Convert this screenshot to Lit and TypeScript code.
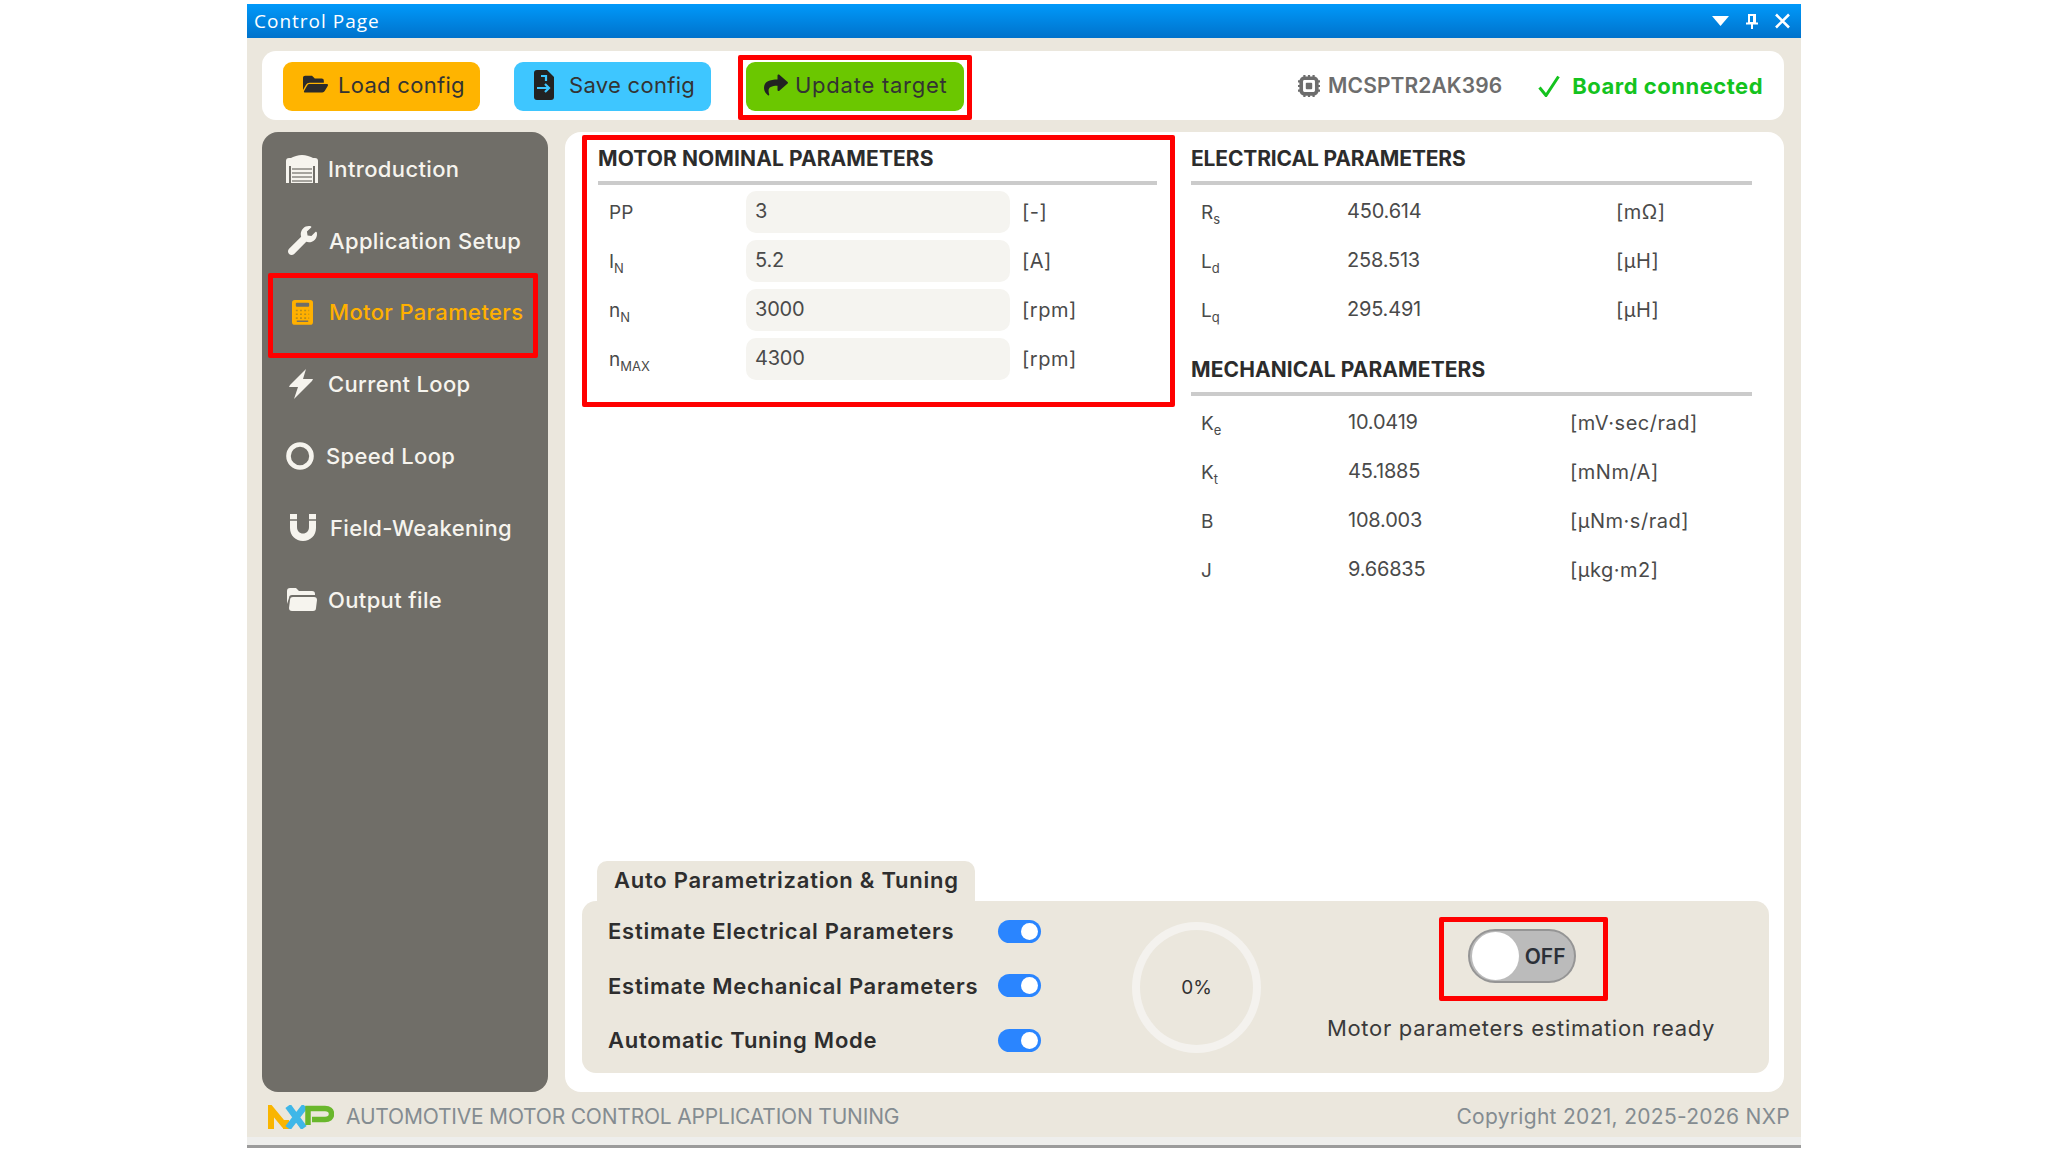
import { LitElement, html, css, svg } from "lit";
import { customElement } from "lit/decorators.js";

const fa = (vb: string, d: string, cls = "") =>
  html`<svg class=${cls} viewBox=${vb} fill="currentColor"><path d=${d}></path></svg>`;

const FOLDER = "M572.694 292.093L500.27 416.248A63.997 63.997 0 0 1 444.989 448H45.025c-18.523 0-30.064-20.093-20.731-36.093l72.424-124.155A64 64 0 0 1 152 256h399.964c18.523 0 30.064 20.093 20.73 36.093zM152 224h328v-48c0-26.51-21.49-48-48-48H272l-64-64H48C21.49 64 0 85.49 0 112v278.046l69.077-118.418C86.214 242.25 117.989 224 152 224z";
const WRENCH = "M507.73 109.1c-2.24-9.03-13.54-12.09-20.12-5.51l-74.36 74.36-67.88-11.31-11.31-67.88 74.36-74.36c6.62-6.62 3.43-17.9-5.66-20.16-47.38-11.74-99.55.91-136.58 37.93-39.64 39.64-50.55 97.1-34.05 147.2L18.74 402.76c-24.99 24.99-24.99 65.51 0 90.5 24.99 24.99 65.51 24.99 90.5 0l213.21-213.21c50.12 16.71 107.47 5.68 147.37-34.22 37.07-37.07 49.7-89.32 37.91-136.73z";
const SHARE = "M503.691 189.836L327.687 37.851C312.281 24.546 288 35.347 288 56.015v80.053C127.371 137.907 0 170.1 0 322.326c0 61.441 39.581 122.309 83.333 154.132 13.653 9.931 33.111-2.533 28.077-18.631C66.066 312.814 132.917 274.316 288 272.085V360c0 20.7 24.3 31.453 39.687 18.164l176.004-152c11.071-9.562 11.086-26.753 0-36.328z";

const garage = html`<svg viewBox="0 0 32 28"><path fill="currentColor" d="M0 28V9c0-3 1-4 4-5.500C8 1.500 12 0 16 0s8 1.500 12 3.500c3 1.500 4 2.500 4 5.500v19h-3V11H3v17z"/><rect x="0" y="3" width="32" height="8" rx="3" fill="currentColor"/><rect x="5" y="11" width="22" height="17" fill="currentColor"/><path stroke="#8a8882" stroke-width="1.4" d="M6 14h20M6 18h20M6 22h20M6 26h20"/></svg>`;
const calc = html`<svg viewBox="0 0 22 26"><rect width="22" height="26" rx="3" fill="currentColor"/><rect x="4" y="3" width="14" height="4" rx="1" fill="#706e68"/><path stroke="#b98c1c" stroke-width="1.6" stroke-dasharray="2 2.4" d="M4 11h14M4 15h14M4 19h14"/><rect x="5" y="21.500" width="12" height="1.500" fill="#706e68"/></svg>`;
const bolt = html`<svg viewBox="0 0 26 30"><path fill="currentColor" d="M18 0 L2 16 L1 18 H10 L6 30 L24 12 L25 10 H15 Z"/></svg>`;
const ring = html`<svg viewBox="0 0 28 28"><circle cx="14" cy="14" r="11.500" fill="none" stroke="currentColor" stroke-width="4.600"/></svg>`;
const magnet = html`<svg viewBox="0 0 26 27"><path fill="currentColor" d="M0 0h7v13c0 4 2.500 6.500 6 6.500s6-2.500 6-6.500V0h7v14c0 7.500-5.500 13-13 13S0 21.500 0 14z"/><path stroke="#706e68" stroke-width="1.500" d="M0 6h7M19 6h7"/></svg>`;
const stackFolder = html`<svg viewBox="0 0 30 23"><path fill="currentColor" d="M0 3c0-2 1-3 3-3h6l3 3h13c2 0 3 1 3 3v1H5c-2 0-3 1-3 3l-2 6z"/><path fill="currentColor" d="M3 12c0-2 1-3 3-3h21c2 0 3 1 3 3l-1 8c0 2-1 3-3 3H5c-2 0-3-1-3-3z"/></svg>`;

const fileIcon = html`<svg viewBox="0 0 20 30"><path fill="currentColor" d="M3 0h10l7 7v20c0 2-1 3-3 3H3c-2 0-3-1-3-3V3c0-2 1-3 3-3z"/><path fill="none" stroke="#3ec6ff" stroke-width="2.200" d="M3 18h12M11 14l4 4-4 4M7 6h5v5"/></svg>`;
const chip = html`<svg viewBox="0 0 24 24"><rect x="3.500" y="3.500" width="17" height="17" rx="3.500" fill="none" stroke="currentColor" stroke-width="4"/><rect x="8.500" y="8.500" width="7" height="7" rx="1" fill="currentColor"/><path stroke="currentColor" stroke-width="2.400" d="M7 0v4M12 0v4M17 0v4M7 20v4M12 20v4M17 20v4M0 7h4M0 12h4M0 17h4M20 7h4M20 12h4M20 17h4"/></svg>`;
const check = html`<svg viewBox="0 0 22 22"><path fill="none" stroke="currentColor" stroke-width="3" d="M1.500 12.500l6.500 8L20.500 1.500"/></svg>`;
const nxp = svg`<path fill="none" stroke="#f9b500" stroke-width="6" d="M3 24V4l14 17"/><path fill="none" stroke="#f9b500" stroke-width="6" d="M18 24V15"/><path fill="none" stroke="#3fb7e8" stroke-width="6.500" d="M20 1l16 22M37 1L20 23"/><path fill="none" stroke="#69b72c" stroke-width="5.500" d="M40 20V3.500h17c4 0 6.500 2 6.500 5.500s-2.500 5.500-6.500 5.500H44"/>`;

const SIDEBAR = [
  { label: "Introduction", icon: garage, iw: 32, ml: 0, gap: 10 },
  { label: "Application Setup", icon: fa("0 0 512 512", WRENCH), iw: 29, ml: 2, gap: 12 },
  { label: "Motor Parameters", icon: calc, iw: 21, ml: 6, gap: 16, active: true },
  { label: "Current Loop", icon: bolt, iw: 26, ml: 2, gap: 14 },
  { label: "Speed Loop", icon: ring, iw: 28, ml: 0, gap: 12 },
  { label: "Field-Weakening", icon: magnet, iw: 26, ml: 4, gap: 14 },
  { label: "Output file", icon: stackFolder, iw: 30, ml: 1, gap: 11 },
];

type Row = [unknown, string, string];
const sym = (a: string, b: string) => html`${a}<sub>${b}</sub>`;
const NOMINAL: Row[] = [
  ["PP", "3", "[-]"],
  [sym("I", "N"), "5.2", "[A]"],
  [sym("n", "N"), "3000", "[rpm]"],
  [sym("n", "MAX"), "4300", "[rpm]"],
];
const ELECTRICAL: Row[] = [
  [sym("R", "s"), "450.614", "[mΩ]"],
  [sym("L", "d"), "258.513", "[μH]"],
  [sym("L", "q"), "295.491", "[μH]"],
];
const MECHANICAL: Row[] = [
  [sym("K", "e"), "10.0419", "[mV·sec/rad]"],
  [sym("K", "t"), "45.1885", "[mNm/A]"],
  ["B", "108.003", "[μNm·s/rad]"],
  ["J", "9.66835", "[μkg·m2]"],
];
const CHECKS = ["Estimate Electrical Parameters", "Estimate Mechanical Parameters", "Automatic Tuning Mode"];

@customElement("app-root")
export class AppRoot extends LitElement {
  static styles = css`
    :host {
      display: block;
      width: 2048px;
      height: 1152px;
      box-sizing: border-box;
      padding: 4px 0 0 247px;
      background: #fff;
      font-family: Inter, "Liberation Sans", sans-serif;
      color: #3a3a3a;
      overflow: hidden;
    }
    svg { display: block; }
    .window {
      width: 1554px;
      height: 1144px;
      background: #ebe7dd;
      display: flex;
      flex-direction: column;
    }
    .title {
      height: 34px;
      flex: none;
      box-sizing: border-box;
      padding: 0 11px 0 7px;
      display: flex;
      align-items: center;
      justify-content: space-between;
      background: linear-gradient(#0099fa, #0072cb);
      color: #fff;
      font: 19px "Open Sans", sans-serif;
      letter-spacing: 1px;
    }
    .winctl { display: flex; align-items: center; gap: 17px; }
    .winctl svg { height: 16px; }
    .toolbar {
      margin: 13px 17px 12px 15px;
      height: 69px;
      flex: none;
      box-sizing: border-box;
      padding: 0 21px 0 21px;
      background: #fff;
      border-radius: 14px;
      display: flex;
      align-items: flex-start;
    }
    .btn {
      width: 197px;
      height: 49px;
      margin-top: 11px;
      border-radius: 9px;
      display: flex;
      align-items: center;
      box-sizing: border-box;
      color: #333;
      font-size: 22px;
      letter-spacing: 0.3px;
      flex: none;
      padding-bottom: 4px;
    }
    .btn svg { flex: none; }
    .load { background: #ffb400; padding-left: 20px; gap: 10px; }
    .load svg { width: 25px; color: #2b2b2b; }
    .save { background: #3ec6ff; margin-left: 34px; padding-left: 20px; gap: 15px; }
    .save svg { width: 20px; height: 30px; color: #222; }
    .frame-btn {
      margin-left: 27px;
      margin-top: 4px;
      border: 5px solid #f00;
      border-radius: 2px;
      padding: 2px 3px 4px;
      height: 65px;
      box-sizing: border-box;
      flex: none;
    }
    .frame-btn .btn { margin: 0; width: 218px; }
    .update { background: #6bc700; padding-left: 18px; gap: 7px; letter-spacing: 0.75px; }
    .update svg { width: 24px; color: #222; }
    .status { margin-left: auto; display: flex; align-items: center; height: 69px; font-weight: 600; font-size: 21px; }
    .board { display: flex; align-items: center; gap: 8px; color: #6d6d6d; margin-right: 36px; letter-spacing: 0.1px; }
    .board svg { width: 22px; height: 24px; }
    .conn { display: flex; align-items: center; gap: 12px; color: #14c31e; font-size: 22px; font-weight: 700; letter-spacing: 0.5px; }
    .conn svg { width: 22px; height: 22px; }
    .body {
      flex: 1;
      min-height: 0;
      display: flex;
      gap: 17px;
      margin: 0 17px 0 15px;
    }
    .side {
      width: 286px;
      flex: none;
      box-sizing: border-box;
      padding: 1px 0 0 24px;
      background: #706e68;
      border-radius: 16px;
      color: #f6f4ee;
      font-size: 22px;
      font-weight: 500;
      letter-spacing: 0.35px;
    }
    .item {
      height: 71.8px;
      display: flex;
      align-items: center;
      position: relative;
    }
    .item.active { color: #ffb000; }
    .item.active::after {
      content: "";
      position: absolute;
      left: -18px;
      top: -3.6px;
      width: 270px;
      height: 85px;
      box-sizing: border-box;
      border: 5px solid #f00;
      border-radius: 2px;
    }
    .main {
      flex: 1;
      min-width: 0;
      background: #fff;
      border-radius: 16px;
      display: flex;
      flex-direction: column;
      padding: 3px 15px 19px 17px;
      box-sizing: border-box;
    }
    .params {
      display: grid;
      grid-template-columns: 593px 1fr;
      column-gap: 16px;
    }
    .motor {
      border: 5px solid #f00;
      border-radius: 2px;
      height: 272px;
      box-sizing: border-box;
      padding: 0 13px 0 11px;
    }
    .right { padding: 5px 17px 0 0; }
    .head {
      height: 45px;
      box-sizing: border-box;
      padding-top: 1px;
      line-height: 36px;
      border-bottom: 4px solid #cbcbcb;
      font-size: 21px;
      font-weight: 700;
      color: #2c2c2c;
      letter-spacing: 0.1px;
      white-space: nowrap;
    }
    .head.elec-head { letter-spacing: -0.15px; }
    .rows { margin-top: 6px; display: flex; flex-direction: column; gap: 7px; }
    .mech { margin-top: 20px; }
    .row {
      height: 42px;
      display: grid;
      align-items: center;
      font-size: 20px;
      color: #4a4a4a;
    }
    .row.nom { grid-template-columns: 148px 264px 1fr; }
    .row.elec { grid-template-columns: 156px 269px 1fr; }
    .row.mec { grid-template-columns: 157px 222px 1fr; }
    .row .k { padding-left: 10px; font-size: 19px; }
    .row.nom .k { padding-left: 11px; }
    sub { font-size: 13px; line-height: 0; vertical-align: -5px; }
    .row .v { height: 42px; line-height: 41px; letter-spacing: -0.2px; }
    .row.nom .v { background: #f5f4f0; border-radius: 10px; padding-left: 9px; }
    .row .u { letter-spacing: 0.5px; }
    .row.nom .u { padding-left: 12px; }
    .auto { margin-top: auto; }
    .tab {
      margin-left: 15px;
      width: 378px;
      height: 40px;
      box-sizing: border-box;
      padding-left: 17px;
      line-height: 38px;
      background: #ebe7dd;
      border-radius: 10px 10px 0 0;
      font-size: 22px;
      font-weight: 600;
      letter-spacing: 0.75px;
      color: #2e2e2e;
      white-space: nowrap;
    }
    .panel {
      height: 172px;
      background: #ebe7dd;
      border-radius: 14px;
      display: flex;
      align-items: flex-start;
    }
    .checks { width: 459px; flex: none; box-sizing: border-box; padding: 3px 0 0 26px; }
    .check {
      height: 54.5px;
      display: flex;
      align-items: center;
      justify-content: space-between;
      font-size: 22px;
      font-weight: 600;
      letter-spacing: 0.75px;
      color: #2e2e2e;
      white-space: nowrap;
    }
    .sw {
      width: 43px;
      height: 23px;
      flex: none;
      border-radius: 12px;
      background: #2a85ff;
      position: relative;
    }
    .sw::after {
      content: "";
      position: absolute;
      right: 3px;
      top: 3px;
      width: 17px;
      height: 17px;
      border-radius: 50%;
      background: #fff;
    }
    .gauge {
      margin: 21px 0 0 91px;
      width: 129px;
      height: 131px;
      flex: none;
      box-sizing: border-box;
      border: 8px solid #f4f2ee;
      border-radius: 50%;
      display: flex;
      align-items: center;
      justify-content: center;
      font-size: 19px;
      color: #333;
    }
    .ready {
      flex: 1;
      margin: 16px 0 0 12px;
      display: flex;
      flex-direction: column;
      align-items: center;
    }
    .toggle-frame {
      width: 169px;
      height: 84px;
      margin-left: 5px;
      box-sizing: border-box;
      border: 5px solid #f00;
      border-radius: 2px;
      display: flex;
      align-items: center;
      justify-content: center;
    }
    .toggle {
      width: 108px;
      height: 54px;
      margin: -6px 4px 0 0;
      box-sizing: border-box;
      border: 2px solid #959595;
      border-radius: 27px;
      background: #bbb;
      display: flex;
      align-items: center;
      padding: 0 8px 0 2px;
      justify-content: space-between;
      font-size: 21px;
      font-weight: 600;
      color: #2b3038;
    }
    .knob { width: 47px; height: 48px; border-radius: 50%; background: #fff; flex: none; }
    .msg { margin-top: 12px; font-size: 22px; letter-spacing: 0.7px; color: #3a3a3a; white-space: nowrap; height: 30px; line-height: 30px; }
    .foot {
      height: 45px;
      flex: none;
      box-sizing: border-box;
      padding: 4px 11px 0 21px;
      display: flex;
      align-items: center;
      color: #848c91;
      font-size: 21px;
      letter-spacing: -0.2px;
    }
    .foot svg { width: 66px; height: 24px; margin-right: 12px; }
    .copy { margin-left: auto; letter-spacing: 0.3px; }
    .strip { height: 8px; flex: none; background: #eeeeec; }
    .line { height: 3px; flex: none; background: #9b9b9b; }
  `;

  private table(rows: Row[], cls: string) {
    return rows.map(
      ([k, v, u]) => html`<div class="row ${cls}"><span class="k">${k}</span><span class="v">${v}</span><span class="u">${u}</span></div>`
    );
  }

  render() {
    return html`
      <div class="window">
        <div class="title">
          <span>Control Page</span>
          <div class="winctl">
            <svg viewBox="0 0 17 16" width="17"><path fill="#fff" d="M0 3h17l-8.500 10z"/></svg>
            <svg viewBox="0 0 12 16" width="12"><path fill="none" stroke="#fff" stroke-width="2" d="M3 2h6v8H3zM0 10.500h12M6 11v5"/><path fill="#fff" d="M7 2h3v8H7z"/></svg>
            <svg viewBox="0 0 15 16" width="15"><path fill="none" stroke="#fff" stroke-width="2.600" d="M1 1.500l13 13M14 1.500l-13 13"/></svg>
          </div>
        </div>
        <div class="toolbar">
          <div class="btn load">${fa("0 0 576 512", FOLDER)}<span>Load config</span></div>
          <div class="btn save">${fileIcon}<span>Save config</span></div>
          <div class="frame-btn"><div class="btn update">${fa("0 0 512 512", SHARE)}<span>Update target</span></div></div>
          <div class="status">
            <div class="board">${chip}<span>MCSPTR2AK396</span></div>
            <div class="conn">${check}<span>Board connected</span></div>
          </div>
        </div>
        <div class="body">
          <nav class="side">
            ${SIDEBAR.map(
              (s) => html`<div class="item ${s.active ? "active" : ""}">
                <span style="width:${s.iw}px;margin-left:${s.ml}px;margin-right:${s.gap}px;flex:none">${s.icon}</span>
                <span>${s.label}</span>
              </div>`
            )}
          </nav>
          <section class="main">
            <div class="params">
              <div class="motor">
                <div class="head">MOTOR NOMINAL PARAMETERS</div>
                <div class="rows">${this.table(NOMINAL, "nom")}</div>
              </div>
              <div class="right">
                <div class="head elec-head">ELECTRICAL PARAMETERS</div>
                <div class="rows">${this.table(ELECTRICAL, "elec")}</div>
                <div class="head mech">MECHANICAL PARAMETERS</div>
                <div class="rows">${this.table(MECHANICAL, "mec")}</div>
              </div>
            </div>
            <div class="auto">
              <div class="tab">Auto Parametrization &amp; Tuning</div>
              <div class="panel">
                <div class="checks">
                  ${CHECKS.map((c) => html`<div class="check"><span>${c}</span><span class="sw"></span></div>`)}
                </div>
                <div class="gauge">0%</div>
                <div class="ready">
                  <div class="toggle-frame"><div class="toggle"><span class="knob"></span><span>OFF</span></div></div>
                  <div class="msg">Motor parameters estimation ready</div>
                </div>
              </div>
            </div>
          </section>
        </div>
        <div class="foot">
          <svg viewBox="0 0 66 24">${nxp}</svg>
          <span>AUTOMOTIVE MOTOR CONTROL APPLICATION TUNING</span>
          <span class="copy">Copyright 2021, 2025-2026 NXP</span>
        </div>
        <div class="strip"></div>
        <div class="line"></div>
      </div>
    `;
  }
}
